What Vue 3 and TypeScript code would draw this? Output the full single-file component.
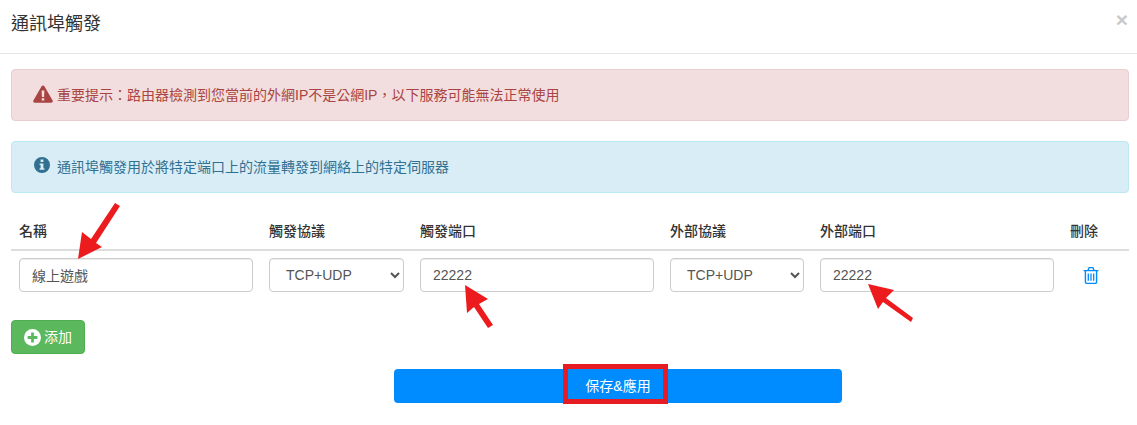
<!-- 通訊埠觸發設定視窗：提示訊息、規則表格與儲存按鈕，並以紅色標註覆蓋。 -->
<script setup lang="ts">
interface Rule {
  name: string
  triggerProto: string
  triggerPort: string
  externalProto: string
  externalPort: string
}

const rules: Rule[] = [
  { name: '線上遊戲', triggerProto: 'TCP+UDP', triggerPort: '22222', externalProto: 'TCP+UDP', externalPort: '22222' },
]

const protocols = ['TCP+UDP', 'TCP', 'UDP']
</script>

<template>
  <div class="modal">
    <header class="modal-header">
      <h4 class="modal-title">通訊埠觸發</h4>
      <span class="close">×</span>
    </header>

    <div class="modal-body">
      <div class="alert alert-danger">
        <svg class="alert-icon warn" viewBox="0 0 20 18" width="20" height="18">
          <path fill="currentColor" fill-rule="evenodd" d="M10 0.5c.6 0 1.1.3 1.4.8l8.2 14.3c.6 1-.1 2.2-1.3 2.2H1.7c-1.2 0-1.9-1.2-1.3-2.2L8.6 1.3C8.9.8 9.4.5 10 .5zM8.6 5.6l.3 6.4h2.2l.3-6.4H8.6zM8.7 13.2v2.4h2.6v-2.4H8.7z" />
        </svg>
        <span>重要提示：路由器檢測到您當前的外網IP不是公網IP，以下服務可能無法正常使用</span>
      </div>

      <div class="alert alert-info">
        <svg class="alert-icon info" viewBox="0 0 16 16" width="16" height="16">
          <path fill="currentColor" fill-rule="evenodd" d="M8 0a8 8 0 1 1 0 16A8 8 0 0 1 8 0zM6.6 2.6v2.4h2.8V2.6H6.6zM5.6 6.4v1.6h1v3.2h-1v1.6h4.8v-1.6h-1V6.4H5.6z" />
        </svg>
        <span>通訊埠觸發用於將特定端口上的流量轉發到網絡上的特定伺服器</span>
      </div>

      <table class="rule-table">
        <colgroup>
          <col class="col-port" />
          <col class="col-proto-wide" />
          <col class="col-port" />
          <col class="col-proto" />
          <col class="col-port" />
          <col />
        </colgroup>
        <thead>
          <tr>
            <th>名稱</th>
            <th>觸發協議</th>
            <th>觸發端口</th>
            <th>外部協議</th>
            <th>外部端口</th>
            <th>刪除</th>
          </tr>
        </thead>
        <tbody>
          <tr v-for="rule in rules" :key="rule.name">
            <td><input class="form-control" type="text" :value="rule.name" /></td>
            <td>
              <select class="form-control select" :value="rule.triggerProto">
                <option v-for="item in protocols" :key="item" :value="item">{{ item }}</option>
              </select>
            </td>
            <td><input class="form-control" type="text" :value="rule.triggerPort" /></td>
            <td>
              <select class="form-control select" :value="rule.externalProto">
                <option v-for="item in protocols" :key="item" :value="item">{{ item }}</option>
              </select>
            </td>
            <td><input class="form-control" type="text" :value="rule.externalPort" /></td>
            <td class="delete-cell">
              <svg class="trash" viewBox="0 0 16 17" width="16" height="17" fill="none" stroke="currentColor">
                <path stroke-width="1.4" d="M.6 3.6h14.8M5 3.4l1-2.3c.1-.3.4-.5.7-.5h2.6c.3 0 .6.2.7.5l1 2.3" />
                <path stroke-width="1.4" d="M2.4 3.6v11.2c0 1 .6 1.6 1.4 1.6h8.4c.8 0 1.4-.6 1.4-1.6V3.6" />
                <path stroke-width="1.3" d="M5.3 6.4v7.4M8 6.4v7.4M10.7 6.4v7.4" />
              </svg>
            </td>
          </tr>
        </tbody>
      </table>

      <button class="btn-add" type="button">
        <svg viewBox="0 0 16 16" width="17" height="17">
          <circle cx="8" cy="8" r="8" fill="#fff" />
          <path fill="#5cb85c" d="M6.7 3.4h2.6v3.3h3.3v2.6H9.3v3.3H6.7V9.3H3.4V6.7h3.3z" />
        </svg>
        <span>添加</span>
      </button>

      <div class="save-row">
        <button class="btn-save" type="button">保存&amp;應用</button>
      </div>
    </div>

    <!-- 標註：紅色箭頭與外框 -->
    <svg class="marks" width="1137" height="425" viewBox="0 0 1137 425">
      <g fill="#ec1c1e">
        <polygon points="78,259 82,232 91,239 115,203 120,206 96,243 102,247" />
        <polygon points="465,285 488,299 479,304 493,325 488,328 474,307 467,313" />
        <polygon points="868,284 894,290 886,298 913,318 911,322 883,302 878,309" />
      </g>
    </svg>
    <div class="mark-box"></div>
  </div>
</template>

<style scoped>
.modal {
  position: relative;
  width: 1137px;
  height: 425px;
  overflow: hidden;
  background: #fff;
  color: #333;
  font-family: "Liberation Sans", "Noto Sans CJK TC", sans-serif;
  font-size: 14px;
  line-height: 20px;
}

.modal-header {
  display: flex;
  align-items: center;
  justify-content: space-between;
  box-sizing: border-box;
  height: 54px;
  padding: 0 9px 6px 11px;
  border-bottom: 1px solid #e5e5e5;
}

.modal-title {
  margin: 0;
  font-size: 18px;
  font-weight: 400;
  line-height: 46px;
}

.close {
  margin-top: -7px;
  color: #c9c9c9;
  font-size: 21px;
  font-weight: 700;
}

.modal-body {
  padding: 15px 8px 0 11px;
}

.alert {
  display: flex;
  align-items: center;
  box-sizing: border-box;
  height: 52px;
  margin-bottom: 20px;
  padding: 0 22px;
  border: 1px solid transparent;
  border-radius: 4px;
}

.alert-danger {
  padding-left: 21px;
  background: #f2dede;
  border-color: #ebccd1;
  color: #a94442;
}

.alert-info {
  background: #d9edf7;
  border-color: #bce8f1;
  color: #31708f;
}

.alert-icon {
  flex: none;
  margin-right: 4px;
}

.alert-icon.info {
  margin: -4px 7px 0 0;
}

.alert-icon.warn {
  margin-top: -2px;
}

.rule-table {
  width: 1118px;
  border-collapse: collapse;
  table-layout: fixed;
}

.col-port {
  width: 250px;
}

.col-proto {
  width: 150px;
}

.col-proto-wide {
  width: 151px;
}

.rule-table th {
  padding: 8px;
  border-bottom: 2px solid #ddd;
  font-weight: 500;
  text-align: left;
}

.rule-table td {
  padding: 7px 8px 8px;
}

.form-control {
  display: block;
  box-sizing: border-box;
  width: 100%;
  height: 34px;
  padding: 6px 12px;
  border: 1px solid #ccc;
  border-radius: 4px;
  background: #fff;
  color: #555;
  font: inherit;
  box-shadow: inset 0 1px 1px rgba(0, 0, 0, 0.075);
}

.delete-cell {
  color: #008cff;
}

.trash {
  display: block;
  margin-left: 13px;
}

.btn-add {
  display: flex;
  align-items: center;
  gap: 3px;
  box-sizing: border-box;
  height: 34px;
  margin-top: 20px;
  padding: 0 12px;
  border: 1px solid #4cae4c;
  border-radius: 4px;
  background: #5cb85c;
  color: #fff;
  font: inherit;
}

.save-row {
  margin-top: 15px;
  padding-left: 383px;
}

.btn-save {
  display: block;
  width: 448px;
  height: 34px;
  border: 0;
  border-radius: 4px;
  background: #008cff;
  color: #fff;
  font: inherit;
}

.marks {
  position: absolute;
  top: 0;
  left: 0;
  pointer-events: none;
}

.mark-box {
  position: absolute;
  top: 364px;
  left: 563px;
  box-sizing: border-box;
  width: 105px;
  height: 40px;
  border: 5px solid #e61c24;
}
</style>
